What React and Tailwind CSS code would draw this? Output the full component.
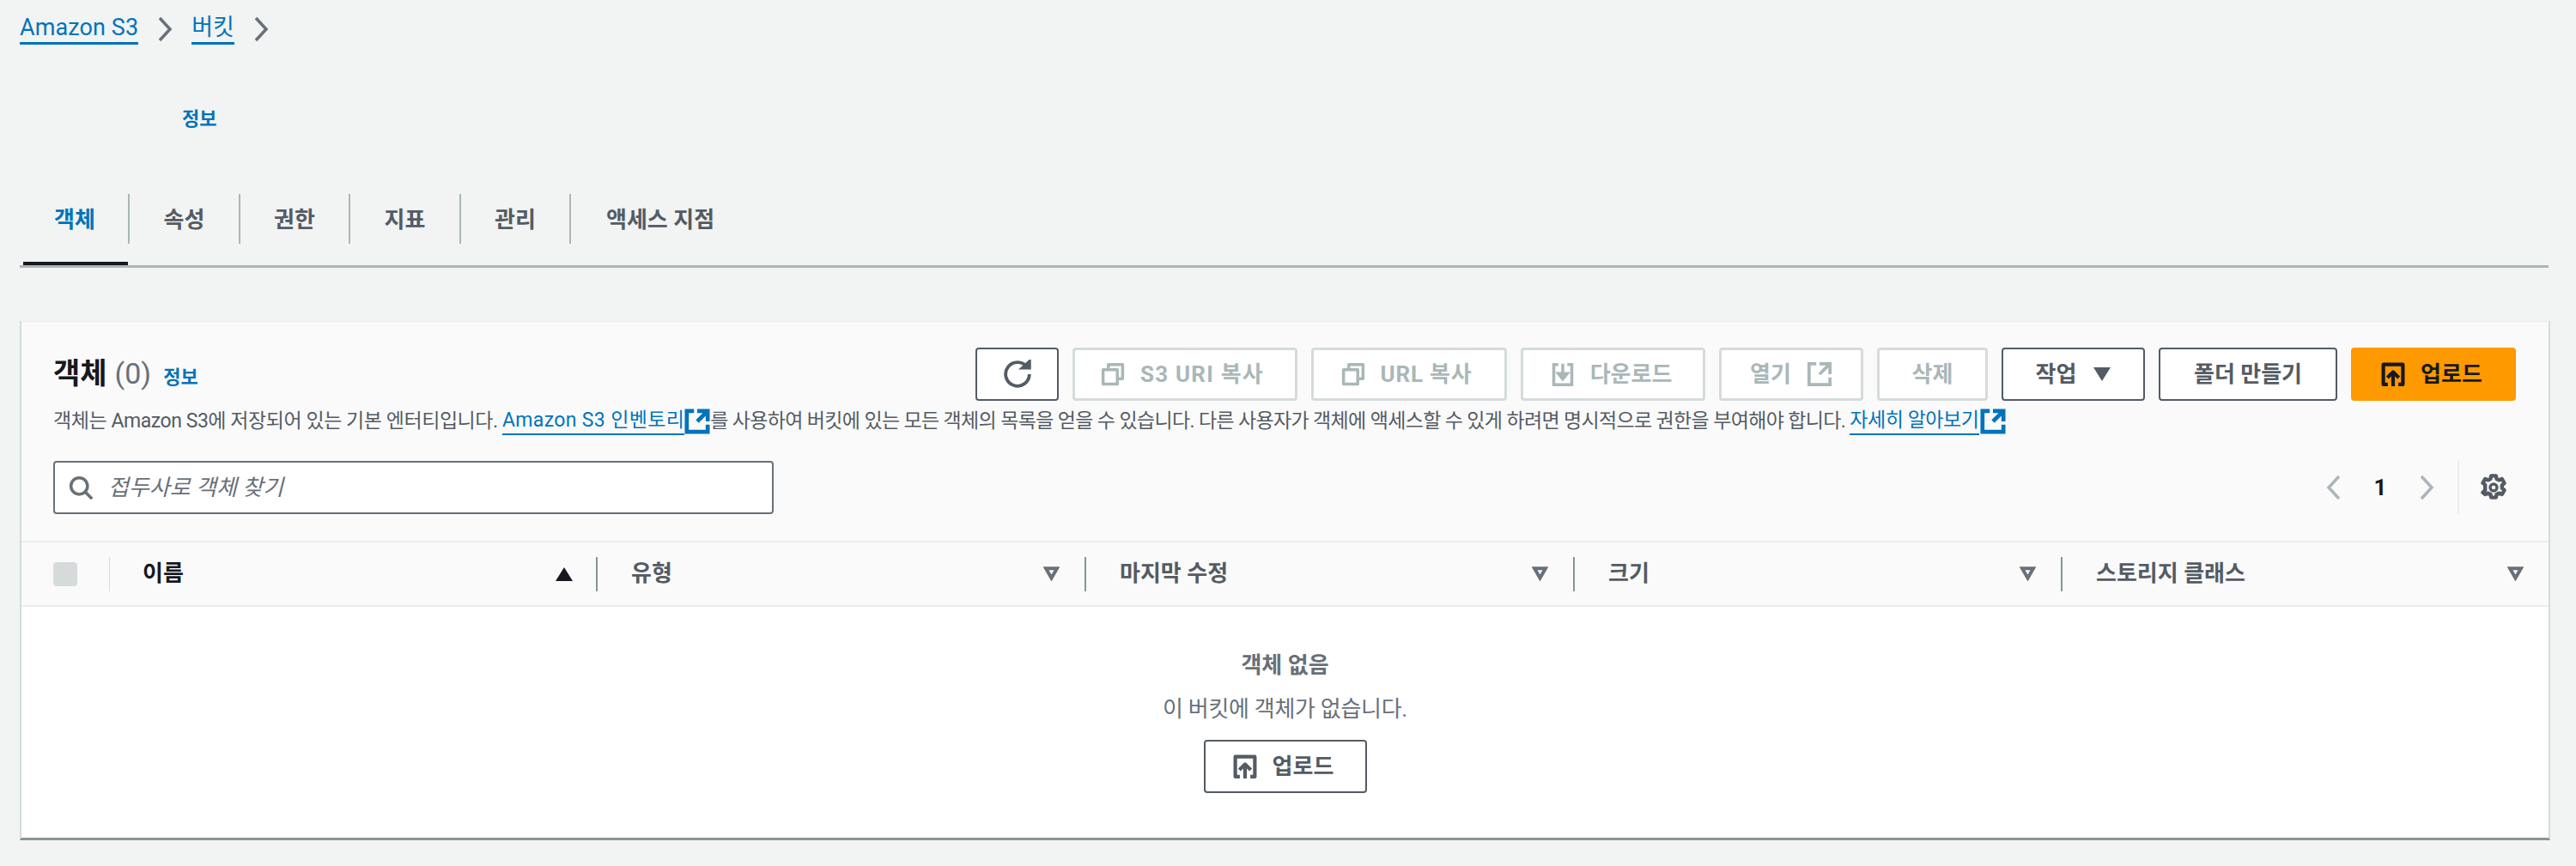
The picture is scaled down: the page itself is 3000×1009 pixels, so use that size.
import React from "react";

const FONT = "font-['Roboto','Noto_Sans_CJK_KR',sans-serif]";

function Ext({ className = "", sw = "2" }) {
  return (
    <svg viewBox="0 0 16 16" fill="none" stroke="currentColor" strokeWidth={sw} className={className}>
      <path d="M14.500 8V1.500H8M14.500 1.500 8 8M6 1.500H1.500v13h13V10" />
    </svg>
  );
}
function Copy({ className = "" }) {
  return (
    <svg viewBox="0 0 16 16" fill="none" stroke="currentColor" strokeWidth="2" strokeLinejoin="round" className={className}>
      <path d="M1.500 5h9.500v9.500H1.500z" />
      <path d="M5 5V1.500h9.500V11H11" />
    </svg>
  );
}
function Download({ className = "" }) {
  return (
    <svg viewBox="0 0 16 16" fill="none" stroke="currentColor" strokeWidth="2" className={className}>
      <path d="M5 1.500H2V15h12V1.500h-3" />
      <path d="M8 1v8" />
      <path d="M4 7h8l-4 5z" fill="currentColor" strokeWidth="1" />
    </svg>
  );
}
function Upload({ className = "" }) {
  return (
    <svg viewBox="0 0 16 16" fill="none" stroke="currentColor" strokeWidth="2.400" strokeLinejoin="round" className={className}>
      <path d="M4.500 14.800H1.500V1.500h13v13.300h-3" />
      <path d="M8 16V6.500M4.200 10.300 8 6.500l3.800 3.800" />
    </svg>
  );
}
function Refresh({ className = "" }) {
  return (
    <svg viewBox="0 0 16 16" fill="none" stroke="currentColor" strokeWidth="1.800" className={className}>
      <path d="M14.500 8a6.500 6.500 0 1 1-1.200-3.800" />
      <path d="M9.500 5H15V0z" fill="currentColor" strokeWidth="0.800" />
    </svg>
  );
}
function Search({ className = "" }) {
  return (
    <svg viewBox="0 0 16 16" fill="none" stroke="currentColor" strokeWidth="2" className={className}>
      <circle cx="7" cy="7" r="5.500" />
      <path d="m11 11 4.500 4.500" />
    </svg>
  );
}
function Gear({ className = "" }) {
  return (
    <svg viewBox="0 0 16 16" fill="none" stroke="currentColor" strokeWidth="2.200" className={className}>
      <path
        d="M6.600 1.200h2.800l.4 1.800 1.300.7 1.800-.7 1.400 2.400-1.400 1.300v1.600l1.400 1.300-1.400 2.400-1.800-.7-1.300.7-.4 1.800H6.600l-.4-1.800-1.300-.7-1.800.7L1.700 10.900l1.400-1.300V6.400L1.700 5.400l1.400-2.400 1.800.7 1.300-.7z"
        strokeLinejoin="round"
      />
      <circle cx="8" cy="8" r="2" strokeWidth="1.700" />
    </svg>
  );
}
function Chevron({ dir = "right", className = "" }) {
  return (
    <svg viewBox="0 0 18 30" fill="none" stroke="currentColor" strokeWidth="3.500" className={className}>
      <path d={dir === "right" ? "M3 2l12 13L3 28" : "M15 2 3 15l12 13"} />
    </svg>
  );
}
function SortOutline() {
  return (
    <svg viewBox="0 0 19 17" className="w-[19px] h-[17px] text-[#687078]" fill="none" stroke="currentColor" strokeWidth="4">
      <path d="M3 2.200h13L9.500 13.500z" />
    </svg>
  );
}

function DisabledBtn({ children, w }) {
  return (
    <div className={`${w} h-[62px] bg-white border-[3px] border-[#d5dbdb] rounded-[4px] flex items-center justify-center gap-[18px] text-[#aab7b8] text-[26px] font-bold`}>
      {children}
    </div>
  );
}
function NormalBtn({ children, w }) {
  return (
    <div className={`${w} h-[62px] bg-white border-[2px] border-[#545b64] rounded-[4px] flex items-center justify-center gap-[18px] text-[#545b64] text-[26px] font-bold`}>
      {children}
    </div>
  );
}

function Th({ label, w }) {
  return (
    <div className={`${w} h-full flex items-center`}>
      <div className="w-[2px] h-[40px] bg-[#879596]" />
      <div className="flex-1 pl-[39px] pr-[29px] flex items-center justify-between text-[#545b64] text-[26px] font-bold">
        <span>{label}</span>
        <SortOutline />
      </div>
    </div>
  );
}

const TABS = [
  { t: "객체", cls: "w-[128px] justify-center border-r-[2px] border-[#aab7b8] text-[#0073bb] pl-[2px]" },
  { t: "속성", cls: "w-[129px] justify-center border-r-[2px] border-[#aab7b8] text-[#545b64]" },
  { t: "권한", cls: "w-[128px] justify-center border-r-[2px] border-[#aab7b8] text-[#545b64]" },
  { t: "지표", cls: "w-[129px] justify-center border-r-[2px] border-[#aab7b8] text-[#545b64]" },
  { t: "관리", cls: "w-[128px] justify-center border-r-[2px] border-[#aab7b8] text-[#545b64]" },
  { t: "액세스 지점", cls: "pl-[41px] text-[#545b64]" },
];

export default function App() {
  return (
    <div className={`${FONT} w-[3000px] h-[1009px] bg-[#f2f3f3] overflow-hidden text-[#16191f]`}>
      <nav className="h-[73px] pl-[23px] flex items-center gap-[22px] text-[27px] text-[#0073bb] pb-[6px]">
        <span className="border-b-[3px] border-[#0073bb] leading-[34px] tracking-[0.1px]">Amazon S3</span>
        <Chevron className="w-[18px] h-[30px] text-[#687078]" />
        <span className="border-b-[3px] border-[#0073bb] leading-[34px]">버킷</span>
        <Chevron className="w-[18px] h-[30px] text-[#687078]" />
      </nav>

      <div className="h-[153px] pl-[212px] pt-[51px] text-[22px] leading-[30px] font-bold text-[#0073bb]">정보</div>

      <div className="mx-[23px] w-[2945px] h-[86px] border-b-[3px] border-[#aab7b8] flex relative">
        {TABS.map(({ t, cls }) => (
          <div key={t} className={`h-[58px] flex items-center text-[26px] leading-[30px] font-bold pt-[2px] ${cls}`}>
            {t}
          </div>
        ))}
        <div className="absolute left-[4px] bottom-0 w-[122px] h-[4px] bg-[#16191f]" />
      </div>

      <section className="mt-[62px] ml-[23px] w-[2947px] h-[605px] bg-white border-l-[2px] border-r-[2px] border-t-[1px] border-b-[3px] border-t-[#eaeded] border-l-[#d5dbdb] border-r-[#d5dbdb] border-b-[#879596] flex flex-col">
        <div className="h-[257px] bg-[#fafafa] border-b-[2px] border-[#eaeded] pl-[37px] pr-[38px] pt-[30px] shrink-0">
          <div className="flex items-start justify-between h-[62px]">
            <div className="flex items-baseline pt-[5px]">
              <span className="text-[34px] font-bold">객체</span>
              <span className="text-[34px] text-[#687078] ml-[9px]">(0)</span>
              <span className="text-[22px] font-bold text-[#0073bb] ml-[14px]">정보</span>
            </div>
            <div className="flex gap-[16px]">
              <NormalBtn w="w-[97px]"><Refresh className="w-[34px] h-[34px]" /></NormalBtn>
              <DisabledBtn w="w-[262px] pr-[6px]"><Copy className="w-[28px] h-[28px]" /><span className="tracking-[1.200px]">S3 URI 복사</span></DisabledBtn>
              <DisabledBtn w="w-[228px] pr-[6px]"><Copy className="w-[28px] h-[28px]" /><span className="tracking-[0.800px]">URL 복사</span></DisabledBtn>
              <DisabledBtn w="w-[215px] pr-[4px]"><Download className="w-[28px] h-[28px]" />다운로드</DisabledBtn>
              <DisabledBtn w="w-[168px]">열기<Ext className="w-[30px] h-[30px]" /></DisabledBtn>
              <DisabledBtn w="w-[129px]">삭제</DisabledBtn>
              <NormalBtn w="w-[167px]">작업<span className="w-0 h-0 ml-[2px] border-l-[10px] border-r-[10px] border-t-[16px] border-l-transparent border-r-transparent border-t-[#545b64]" /></NormalBtn>
              <NormalBtn w="w-[208px]">폴더 만들기</NormalBtn>
              <div className="w-[192px] h-[62px] bg-[#ff9900] rounded-[4px] flex items-center justify-center gap-[18px] pr-[4px] text-[#16191f] text-[26px] font-bold">
                <Upload className="w-[28px] h-[28px]" />업로드
              </div>
            </div>
          </div>
          <p className="text-[23px] tracking-[-0.450px] leading-[32px] mt-[8px] text-[#545b64] flex items-center whitespace-pre">
            <span>객체는 Amazon S3에 저장되어 있는 기본 엔터티입니다. </span>
            <span className="text-[#0073bb] border-b-[2px] border-[#0073bb] leading-[30px] tracking-[0.350px]">Amazon S3 인벤토리</span>
            <Ext sw="2.500" className="w-[30px] h-[30px] text-[#0073bb]" />
            <span className="tracking-[-0.650px]">를 사용하여 버킷에 있는 모든 객체의 목록을 얻을 수 있습니다. 다른 사용자가 객체에 액세스할 수 있게 하려면 명시적으로 권한을 부여해야 합니다. </span>
            <span className="text-[#0073bb] border-b-[2px] border-[#0073bb] leading-[30px]">자세히 알아보기</span>
            <Ext sw="2.500" className="w-[30px] h-[30px] text-[#0073bb] ml-[1px]" />
          </p>
          <div className="flex items-center justify-between mt-[30px]">
            <div className="w-[839px] h-[62px] bg-white border-[2px] border-[#687078] rounded-[4px] flex items-center pl-[16px] gap-[18px]">
              <Search className="w-[28px] h-[28px] text-[#687078]" />
              <span className="text-[26px] italic text-[#687078]">접두사로 객체 찾기</span>
            </div>
            <div className="flex items-center h-[62px] pr-[10px]">
              <Chevron dir="left" className="w-[18px] h-[30px] text-[#aab7b8]" />
              <span className="w-[90px] text-center text-[26px] font-bold">1</span>
              <Chevron className="w-[18px] h-[30px] text-[#aab7b8]" />
              <div className="w-[2px] h-[62px] bg-[#eaeded] ml-[27px]" />
              <Gear className="w-[32px] h-[32px] text-[#545b64] ml-[24px]" />
            </div>
          </div>
        </div>

        <div className="h-[75px] bg-[#fafafa] border-b-[2px] border-[#eaeded] flex items-center pl-[37px] shrink-0">
          <div className="w-[28px] h-[28px] rounded-[4px] bg-[#d5dbdb]" />
          <div className="ml-[37px] w-[1px] h-[40px] bg-[#d5dbdb]" />
          <div className="w-[566px] pl-[38px] pr-[27px] flex items-center justify-between text-[26px] font-bold">
            <span>이름</span>
            <span className="w-0 h-0 border-l-[10px] border-r-[10px] border-b-[16px] border-l-transparent border-r-transparent border-b-[#16191f]" />
          </div>
          <Th label="유형" w="w-[569px]" />
          <Th label="마지막 수정" w="w-[569px]" />
          <Th label="크기" w="w-[568px]" />
          <Th label="스토리지 클래스" w="w-[568px]" />
        </div>

        <div className="flex-1 flex flex-col items-center pt-[50px]">
          <div className="text-[26px] leading-[36px] font-bold text-[#687078]">객체 없음</div>
          <div className="text-[26px] tracking-[-0.3px] leading-[36px] mt-[15px] text-[#687078]">이 버킷에 객체가 없습니다.</div>
          <div className="mt-[18px] w-[190px] h-[62px] bg-white border-[2px] border-[#545b64] rounded-[4px] flex items-center justify-center gap-[18px] pr-[4px] text-[#545b64] text-[26px] font-bold">
            <Upload className="w-[28px] h-[28px]" />업로드
          </div>
        </div>
      </section>
    </div>
  );
}
